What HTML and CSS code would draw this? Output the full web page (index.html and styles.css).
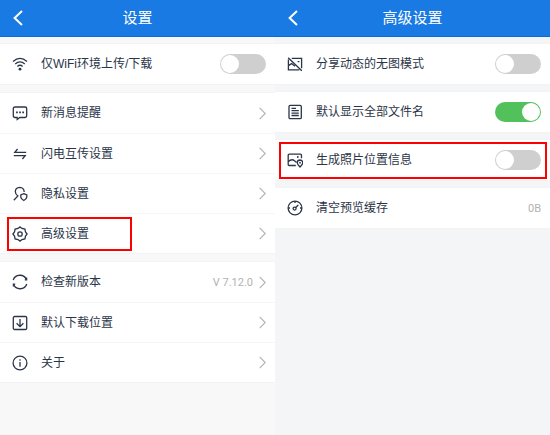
FILE: index.html
```html
<!DOCTYPE html>
<html lang="zh-CN">
<head>
  <meta charset="UTF-8">
  <meta name="viewport" content="width=device-width, initial-scale=1.0">
  <title>设置</title>
  <link rel="stylesheet" href="styles.css">
</head>
<body>
  <svg class="defs" aria-hidden="true">
    <symbol id="arrow" viewBox="0 0 7 13">
      <path d="M0.7 0.8 L6.2 6.5 L0.7 12.2"/>
    </symbol>
  </svg>

  <main class="screens">
    <section class="screen">
      <header class="topbar">
        <button class="back" type="button" aria-label="返回">
          <svg viewBox="0 0 10 16"><path d="M9 1 L1.6 8 L9 15"/></svg>
        </button>
        <h1>设置</h1>
      </header>

      <div class="groups">
        <div class="group">
          <div class="row">
            <svg class="icon" viewBox="0 0 16 16">
              <path d="M1 5.4 Q8 -0.6 15 5.4 M3.2 8 Q8 3.8 12.8 8 M5.4 10.5 Q8 8.1 10.6 10.5"/>
              <circle class="solid" cx="8" cy="13.2" r="1.4"/>
            </svg>
            <label class="label" for="wifi-only">仅WiFi环境上传/下载</label>
            <input class="switch" type="checkbox" id="wifi-only">
          </div>
        </div>

        <div class="group">
          <a class="row" href="#message">
            <svg class="icon" viewBox="0 0 16 16">
              <path d="M3 2 H13 Q14.7 2 14.7 3.7 V10.8 Q14.7 12.5 13 12.5 H7.8 L5.2 14.5 V12.5 H3 Q1.3 12.5 1.3 10.8 V3.7 Q1.3 2 3 2 Z"/>
              <path class="solid" d="M4.1 6.6 h1.7 v1.6 h-1.7 z M7.2 6.6 h1.7 v1.6 h-1.7 z M10.3 6.6 h1.7 v1.6 h-1.7 z"/>
            </svg>
            <span class="label">新消息提醒</span>
            <svg class="arrow"><use href="#arrow"/></svg>
          </a>
          <a class="row" href="#transfer">
            <svg class="icon" viewBox="0 0 16 16">
              <path d="M14.2 6.3 H2.8 L5.6 3 M1.8 9.7 H13.2 L10.4 13"/>
            </svg>
            <span class="label">闪电互传设置</span>
            <svg class="arrow"><use href="#arrow"/></svg>
          </a>
          <a class="row" href="#privacy">
            <svg class="icon" viewBox="0 0 16 16">
              <path d="M1.8 14.2 L5.9 10 Q3.3 8.4 3.3 5.6 Q3.5 1.6 7.8 1.4 Q12 1.6 12.2 6"/>
              <path d="M11.8 7.6 L14.8 8.9 V11.2 Q14.5 13.3 11.8 14.5 Q9.1 13.3 8.8 11.2 V8.9 Z"/>
            </svg>
            <span class="label">隐私设置</span>
            <svg class="arrow"><use href="#arrow"/></svg>
          </a>
          <a class="row marked" href="#advanced">
            <svg class="icon" viewBox="0 0 16 16">
              <path d="M8 0.9 L10 2.5 L12.9 3.1 L13.5 6 L15.1 8 L13.5 10 L12.9 12.9 L10 13.5 L8 15.1 L6 13.5 L3.1 12.9 L2.5 10 L0.9 8 L2.5 6 L3.1 3.1 L6 2.5 Z"/>
              <circle cx="8" cy="8" r="2.2"/>
            </svg>
            <span class="label">高级设置</span>
            <svg class="arrow"><use href="#arrow"/></svg>
          </a>
        </div>

        <div class="group">
          <a class="row" href="#update">
            <svg class="icon" viewBox="0 0 16 16">
              <path d="M1.2 6 A7 6.7 0 0 1 14.4 5.5 M14.6 3.4 V5.8 H12.8 M14.8 10 A7 6.7 0 0 1 1.6 10.5 M1.4 12.6 V10.2 H3.2"/>
            </svg>
            <span class="label">检查新版本</span>
            <span class="value">V 7.12.0</span>
            <svg class="arrow"><use href="#arrow"/></svg>
          </a>
          <a class="row" href="#download">
            <svg class="icon" viewBox="0 0 16 16">
              <rect x="1.3" y="1.5" width="13.4" height="13" rx="1.3"/>
              <path d="M8 4 V11.5 M4.6 8.3 L8 11.6 L11.4 8.3"/>
            </svg>
            <span class="label">默认下载位置</span>
            <svg class="arrow"><use href="#arrow"/></svg>
          </a>
          <a class="row" href="#about">
            <svg class="icon" viewBox="0 0 16 16">
              <circle cx="8" cy="8" r="6.9"/>
              <path d="M8 7 V11.8 M8 4.3 V5.8"/>
            </svg>
            <span class="label">关于</span>
            <svg class="arrow"><use href="#arrow"/></svg>
          </a>
        </div>
      </div>
    </section>

    <section class="screen advanced">
      <header class="topbar">
        <button class="back" type="button" aria-label="返回">
          <svg viewBox="0 0 10 16"><path d="M9 1 L1.6 8 L9 15"/></svg>
        </button>
        <h1>高级设置</h1>
      </header>

      <div class="groups">
        <div class="group">
          <div class="row">
            <svg class="icon" viewBox="0 0 16 16">
              <path d="M4.8 2.3 H14.6 V12.2 M1.4 3.5 V13.8 H12.3 M1.2 1.7 L14.8 14.7 M1.4 9.6 L4.6 7.6 L8 10.2 M10.6 5.6 H12.4"/>
            </svg>
            <label class="label" for="no-image">分享动态的无图模式</label>
            <input class="switch" type="checkbox" id="no-image">
          </div>
        </div>
        <div class="group">
          <div class="row">
            <svg class="icon" viewBox="0 0 16 16">
              <rect x="2" y="1.3" width="12.3" height="13.4" rx="1.2"/>
              <path d="M4.5 4.4 H9 M4.5 6.7 H11.8 M4.5 9.1 H11.8 M4.5 11.5 H11.8"/>
            </svg>
            <label class="label" for="full-name">默认显示全部文件名</label>
            <input class="switch" type="checkbox" id="full-name" checked>
          </div>
        </div>
        <div class="group">
          <div class="row marked">
            <svg class="icon" viewBox="0 0 16 16">
              <path d="M8.8 13.5 H2.3 Q1.2 13.5 1.2 12.4 V3.2 Q1.2 2.1 2.3 2.1 H13.4 Q14.5 2.1 14.5 3.2 V6.3 M1.2 9.7 Q4.8 6.3 7.5 8.8 L9.6 10.5"/>
              <circle class="solid" cx="10.8" cy="5" r="0.9"/>
              <path d="M13 15 Q10.2 12.3 10.2 10.6 Q10.4 8.1 13 8 Q15.6 8.1 15.8 10.6 Q15.8 12.3 13 15 Z"/>
              <circle class="solid" cx="13" cy="10.7" r="0.9"/>
            </svg>
            <label class="label" for="photo-location">生成照片位置信息</label>
            <input class="switch" type="checkbox" id="photo-location">
          </div>
        </div>
        <div class="group">
          <button class="row" type="button">
            <svg class="icon" viewBox="0 0 16 16">
              <circle cx="8" cy="8" r="6.9"/>
              <circle cx="7.6" cy="8.6" r="1.5"/>
              <path d="M8.7 7.5 L11.3 5 M8 1 V3 M1.2 8 H3 M13 8 H14.8"/>
            </svg>
            <span class="label">清空预览缓存</span>
            <span class="value">0B</span>
          </button>
        </div>
      </div>
    </section>
  </main>
</body>
</html>
```

FILE: styles.css
```css
*,
*::before,
*::after {
  box-sizing: border-box;
}

body {
  margin: 0;
  font-family: "Liberation Sans", "Noto Sans CJK SC", sans-serif;
  font-size: 12px;
  color: #2b3548;
}

.defs {
  display: none;
}

.screens {
  display: grid;
  grid-template-columns: 1fr 1fr;
  min-height: 100vh;
}

.screen {
  background: #f8f8f8;
}

.screen.advanced {
  background: #f4f5f7;
}

.topbar {
  display: grid;
  grid-template-columns: 24px 1fr 24px;
  align-items: center;
  height: 37px;
  padding: 0 6px;
  background: #187ae2;
  border-bottom: 1px solid #0d6bd6;
  color: #fff;
}

.topbar h1 {
  margin: 0;
  font-size: 15px;
  font-weight: 400;
  line-height: 20px;
  text-align: center;
}

.back {
  display: flex;
  justify-content: center;
  padding: 0;
  border: none;
  background: none;
  cursor: pointer;
}

.back svg {
  width: 10px;
  height: 16px;
  fill: none;
  stroke: #fff;
  stroke-width: 2;
}

.groups {
  display: flex;
  flex-direction: column;
  gap: 7px;
  padding-top: 6px;
}

.advanced .groups {
  gap: 6px;
}

.group {
  background: #fff;
  border-top: 1px solid #f3f3f4;
  border-bottom: 1px solid #f3f3f4;
}

.row {
  position: relative;
  display: flex;
  align-items: center;
  width: 100%;
  height: 40px;
  padding: 0 9px 0 12px;
  border: none;
  background: none;
  color: inherit;
  font: inherit;
  text-align: left;
  text-decoration: none;
}

.row + .row {
  border-top: 1px solid #f6f6f7;
}

.icon {
  flex: none;
  width: 16px;
  height: 16px;
  margin-right: 13px;
  fill: none;
  stroke: #2b3548;
  stroke-width: 1.3;
}

.icon .solid {
  fill: #2b3548;
  stroke: none;
}

.label {
  flex: 1;
  line-height: 18px;
}

.value {
  color: #b2b2b2;
  font-family: Roboto, sans-serif;
  font-size: 11px;
}

.arrow {
  flex: none;
  width: 7px;
  height: 13px;
  margin-left: 6px;
  fill: none;
  stroke: #b4b4b4;
  stroke-width: 1.2;
}

.switch {
  appearance: none;
  flex: none;
  width: 46px;
  height: 20px;
  margin: 0;
  padding: 1px;
  border-radius: 10px;
  background: #cfcfcf;
  cursor: pointer;
}

.switch::before {
  content: "";
  display: block;
  width: 18px;
  height: 18px;
  border-radius: 50%;
  background: #fff;
}

.switch:checked {
  background: #52c15c;
}

.switch:checked::before {
  margin-left: auto;
}

/* red frame over the highlighted entries */
.marked::after {
  content: "";
  position: absolute;
  top: 3px;
  bottom: 2px;
  left: 7px;
  width: 125px;
  border: 2px solid #f00;
  pointer-events: none;
}

.advanced .marked::after {
  top: 2px;
  bottom: 1px;
  left: 4px;
  right: 3px;
  width: auto;
}
```
